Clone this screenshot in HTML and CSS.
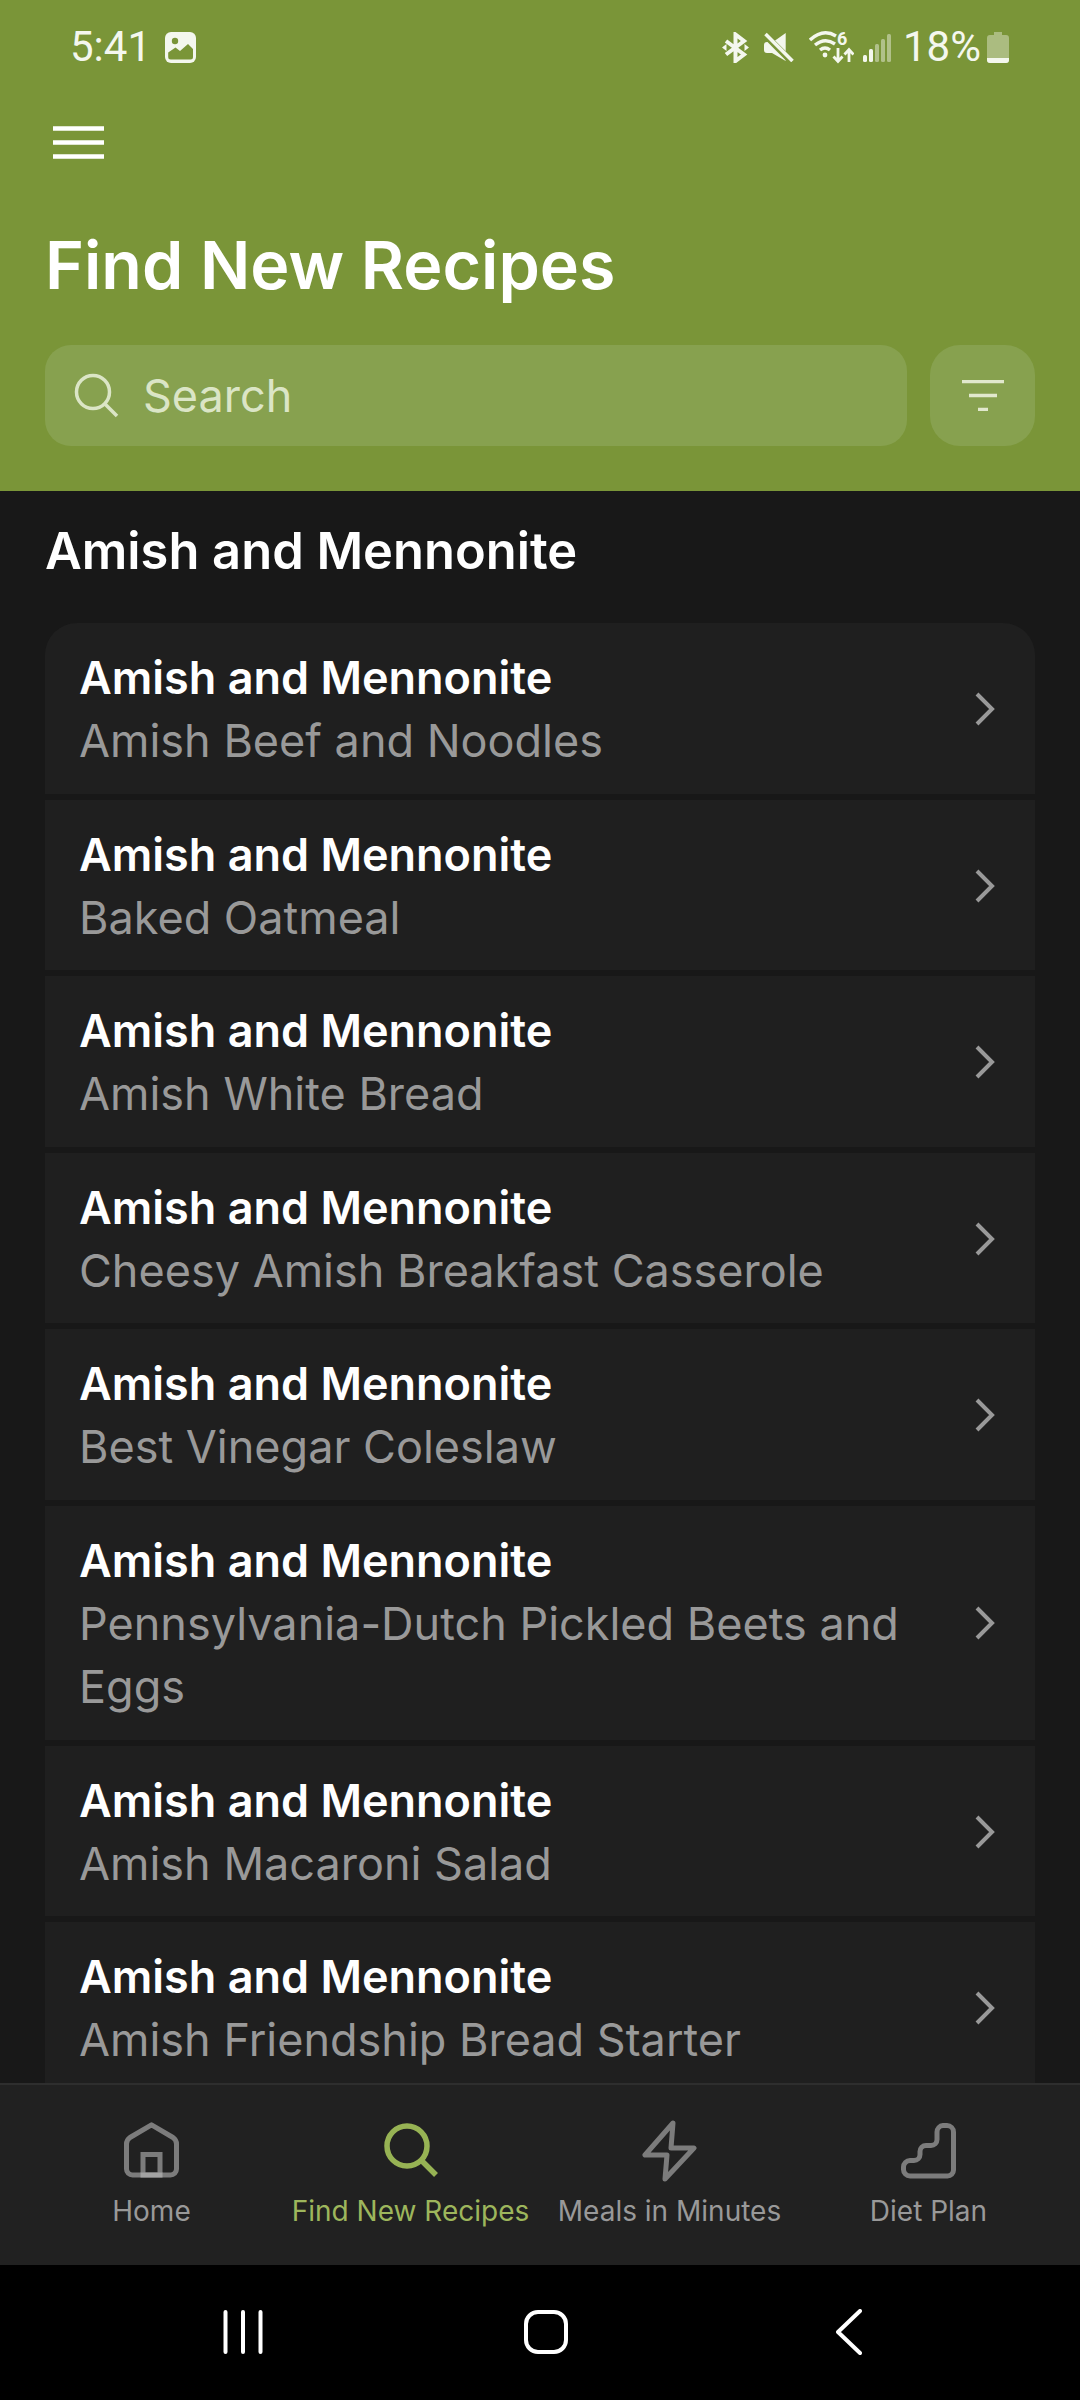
FILE: index.html
```html
<!DOCTYPE html>
<html lang="en">
<head>
  <meta charset="UTF-8" />
  <meta name="viewport" content="width=device-width, initial-scale=1.0"/>
  <title>Find New Recipes</title>
  <link rel="stylesheet" href="styles.css">
</head>
<body>
  <div class="screen">
    <header class="top">
      <div class="status-bar">
        <div class="status-left">
          <span class="status-text">5:41</span>
          <svg class="ic-image" width="31" height="31" viewBox="0 0 31 31">
            <rect width="31" height="31" rx="6" fill="#f4f7ee"/>
            <circle cx="10" cy="9" r="3.2" fill="#7a9538"/>
            <path d="M3.2 20.5 L10.5 15.5 L15 19 L23 12 L28 17 V25 Q28 27.5 25.5 27.5 H5.7 Q3.2 27.5 3.2 25 Z" fill="#7a9538"/>
          </svg>
        </div>
        <div class="status-right">
          <svg class="ic-bt" width="27" height="31" viewBox="0 0 27 31" fill="none">
            <path d="M4 9 L22 22.500 L13.500 29 V2.500 L22 9 L4 22.500" stroke="#f4f7ee" stroke-width="4"/>
            <path d="M0 15.500 L4.500 12 V19 Z M27 15.500 L22.500 12 V19 Z" fill="#f4f7ee"/>
          </svg>
          <svg class="ic-mute" width="30" height="30" viewBox="0 0 30 30">
            <path d="M21.700 1 V29 L8 21 H3 Q0 21 0 18 V13 Q0 10 3 10 H9 Z" fill="#f4f7ee"/>
            <path d="M0 2 L28 30" stroke="#7a9538" stroke-width="6.500"/>
            <path d="M1.500 2 L28.500 29" stroke="#f4f7ee" stroke-width="3.600"/>
          </svg>
          <svg class="ic-wifi" width="45" height="44" viewBox="0 -6 45 44" fill="none">
            <path d="M1 9 Q14 -3 27 5" stroke="#f4f7ee" stroke-width="3.400"/>
            <path d="M6 14 Q16 6 26 13" stroke="#f4f7ee" stroke-width="3.400"/>
            <path d="M11 19 Q16 15 21 19" stroke="#f4f7ee" stroke-width="3.400"/>
            <circle cx="16" cy="24" r="2.400" fill="#f4f7ee"/>
            <text x="28" y="14" class="wifi-six">6</text>
            <path d="M29 17 V30 M24.500 25.500 L29 30.500 L33.500 25.500 M40 31 V19 M35.500 23.500 L40 18.500 L44.500 23.500" stroke="#f4f7ee" stroke-width="2.800"/>
          </svg>
          <svg class="ic-signal" width="28" height="30" viewBox="0 0 28 30">
            <rect x="0" y="23" width="4" height="7" rx="1.500" fill="#f4f7ee"/>
            <rect x="6" y="17" width="4" height="13" rx="1.500" fill="#f4f7ee"/>
            <rect x="12" y="12" width="4" height="18" rx="1.500" fill="#f4f7ee" opacity=".45"/>
            <rect x="18" y="7" width="4" height="23" rx="1.500" fill="#f4f7ee" opacity=".45"/>
            <rect x="24" y="2" width="4" height="28" rx="1.500" fill="#f4f7ee" opacity=".45"/>
          </svg>
          <span class="status-text pct">18%</span>
          <svg class="ic-battery" width="22" height="31" viewBox="0 0 22 31">
            <path d="M7 0 H15 V3 H19 Q22 3 22 6 V28 Q22 31 19 31 H3 Q0 31 0 28 V6 Q0 3 3 3 H7 Z" fill="#f4f7ee" opacity=".4"/>
            <path d="M0 26 H22 V28 Q22 31 19 31 H3 Q0 31 0 28 Z" fill="#f4f7ee"/>
          </svg>
        </div>
      </div>

      <svg class="menu-icon" width="51" height="33" viewBox="0 0 51 33">
        <path d="M0 2.500 H51 M0 16.500 H51 M0 30.500 H51" stroke="#fff" stroke-width="4.500"/>
      </svg>

      <h1 class="page-title">Find New Recipes</h1>

      <div class="search-row">
        <div class="search-box">
          <svg width="46" height="46" viewBox="0 0 46 46" fill="none">
            <circle cx="19" cy="19" r="16.500" stroke="#dbe5c6" stroke-width="3.500"/>
            <path d="M31 31 L43 43" stroke="#dbe5c6" stroke-width="3.500"/>
          </svg>
          <span class="search-text">Search</span>
        </div>
        <div class="filter-btn">
          <svg width="42" height="31" viewBox="0 0 42 31">
            <path d="M0 1.500 H42 M7 15.500 H35 M16 29.500 H26" stroke="#e1e8cd" stroke-width="3.500"/>
          </svg>
        </div>
      </div>
    </header>

    <main class="content">
      <h2 class="section-title">Amish and Mennonite</h2>
      <div class="recipe-list">
        <div class="recipe-row">
          <div class="recipe-text"><div class="recipe-cat">Amish and Mennonite</div><div class="recipe-name">Amish Beef and Noodles</div></div>
          <svg class="chev" width="20" height="34" viewBox="0 0 20 34" fill="none"><path d="M2 2 L17 17 L2 32" stroke="#999" stroke-width="4"/></svg>
        </div>
        <div class="recipe-row">
          <div class="recipe-text"><div class="recipe-cat">Amish and Mennonite</div><div class="recipe-name">Baked Oatmeal</div></div>
          <svg class="chev" width="20" height="34" viewBox="0 0 20 34" fill="none"><path d="M2 2 L17 17 L2 32" stroke="#999" stroke-width="4"/></svg>
        </div>
        <div class="recipe-row">
          <div class="recipe-text"><div class="recipe-cat">Amish and Mennonite</div><div class="recipe-name">Amish White Bread</div></div>
          <svg class="chev" width="20" height="34" viewBox="0 0 20 34" fill="none"><path d="M2 2 L17 17 L2 32" stroke="#999" stroke-width="4"/></svg>
        </div>
        <div class="recipe-row">
          <div class="recipe-text"><div class="recipe-cat">Amish and Mennonite</div><div class="recipe-name">Cheesy Amish Breakfast Casserole</div></div>
          <svg class="chev" width="20" height="34" viewBox="0 0 20 34" fill="none"><path d="M2 2 L17 17 L2 32" stroke="#999" stroke-width="4"/></svg>
        </div>
        <div class="recipe-row">
          <div class="recipe-text"><div class="recipe-cat">Amish and Mennonite</div><div class="recipe-name">Best Vinegar Coleslaw</div></div>
          <svg class="chev" width="20" height="34" viewBox="0 0 20 34" fill="none"><path d="M2 2 L17 17 L2 32" stroke="#999" stroke-width="4"/></svg>
        </div>
        <div class="recipe-row">
          <div class="recipe-text"><div class="recipe-cat">Amish and Mennonite</div><div class="recipe-name">Pennsylvania-Dutch Pickled Beets and Eggs</div></div>
          <svg class="chev" width="20" height="34" viewBox="0 0 20 34" fill="none"><path d="M2 2 L17 17 L2 32" stroke="#999" stroke-width="4"/></svg>
        </div>
        <div class="recipe-row">
          <div class="recipe-text"><div class="recipe-cat">Amish and Mennonite</div><div class="recipe-name">Amish Macaroni Salad</div></div>
          <svg class="chev" width="20" height="34" viewBox="0 0 20 34" fill="none"><path d="M2 2 L17 17 L2 32" stroke="#999" stroke-width="4"/></svg>
        </div>
        <div class="recipe-row">
          <div class="recipe-text"><div class="recipe-cat">Amish and Mennonite</div><div class="recipe-name">Amish Friendship Bread Starter</div></div>
          <svg class="chev" width="20" height="34" viewBox="0 0 20 34" fill="none"><path d="M2 2 L17 17 L2 32" stroke="#999" stroke-width="4"/></svg>
        </div>
      </div>
    </main>

    <nav class="tab-bar">
      <div class="tab">
        <svg class="tab-icon" width="55" height="62" viewBox="0 -2 55 62" fill="none">
          <path d="M27.500 2.800 L49 15.500 Q52.500 18 52.500 22 V47 a6 6 0 0 1 -6 6 H8.500 a6 6 0 0 1 -6 -6 V22 Q2.500 18 6 15.500 Z" stroke="#7c7c7c" stroke-width="5" stroke-linejoin="round"/>
          <path d="M19 53 V32.500 H36 V53" stroke="#7c7c7c" stroke-width="5"/>
          <path d="M16.500 50.500 H38.500 V55.500 H16.500 Z" fill="#a3a3a3"/>
        </svg>
        <span class="tab-label">Home</span>
      </div>
      <div class="tab active">
        <svg class="tab-icon" width="55" height="62" viewBox="0 -2 55 62" fill="none">
          <circle cx="24" cy="24" r="20" stroke="#97b354" stroke-width="5.500"/>
          <path d="M38 38 L53 53" stroke="#97b354" stroke-width="5.500"/>
        </svg>
        <span class="tab-label">Find New Recipes</span>
      </div>
      <div class="tab">
        <svg class="tab-icon" width="55" height="62" viewBox="0 0 55 62" fill="none">
          <path d="M31 3 L3 35 H25 L23 59 L52 28 H29 Z" stroke="#7c7c7c" stroke-width="5" stroke-linejoin="round"/>
        </svg>
        <span class="tab-label">Meals in Minutes</span>
      </div>
      <div class="tab">
        <svg class="tab-icon" width="55" height="62" viewBox="0 -3 55 62" fill="none">
          <path d="M42 2.500 H46 a6.500 6.500 0 0 1 6.500 6.500 V47 a6 6 0 0 1 -6 6 H9 a6.500 6.500 0 0 1 -6.500 -6.500 V44 a6.500 6.500 0 0 1 6.500 -6.500 H13 a6 6 0 0 0 6 -6 V28.500 a6 6 0 0 1 6 -6 H30 a6 6 0 0 0 6 -6 V9 a6.500 6.500 0 0 1 6 -6.500 Z" stroke="#7c7c7c" stroke-width="5" stroke-linejoin="round"/>
        </svg>
        <span class="tab-label">Diet Plan</span>
      </div>
    </nav>

    <div class="nav-bar">
      <div class="nav-btn">
        <svg width="40" height="44" viewBox="0 0 40 44"><path d="M2.500 2 V42 M20 2 V42 M37.500 2 V42" stroke="#fff" stroke-width="4" stroke-linecap="round"/></svg>
      </div>
      <div class="nav-btn">
        <svg width="44" height="44" viewBox="0 0 44 44" fill="none"><rect x="2" y="2" width="40" height="40" rx="12" stroke="#fff" stroke-width="4"/></svg>
      </div>
      <div class="nav-btn">
        <svg width="26" height="46" viewBox="0 0 26 46" fill="none"><path d="M24 2 L2 23 L24 44" stroke="#fff" stroke-width="4" stroke-linecap="round" stroke-linejoin="round"/></svg>
      </div>
    </div>
  </div>
</body>
</html>
```

FILE: styles.css
```css
* {
  box-sizing: border-box;
}

html, body {
  margin: 0;
  padding: 0;
}

body {
  font-family: Inter, 'Noto Sans', sans-serif;
  background: #181818;
  color: #fff;
}

svg {
  display: block;
  flex-shrink: 0;
}

.screen {
  width: 1080px;
  height: 2400px;
  display: flex;
  flex-direction: column;
  overflow: hidden;
}

/* green header */
.top {
  background: #7a9538;
  height: 491px;
  flex-shrink: 0;
}

.status-bar {
  height: 70px;
  padding: 24px 71px 0 70px;
  display: flex;
  justify-content: space-between;
  align-items: center;
}

.status-left {
  display: flex;
  align-items: center;
  gap: 14px;
}

.status-right {
  display: flex;
  align-items: center;
}

.status-text {
  font-family: Roboto, sans-serif;
  font-size: 42px;
  line-height: 46px;
  color: #f4f7ee;
}

.ic-mute { margin-left: 15px; }
.ic-wifi { margin-left: 15px; }
.ic-signal { margin-left: 9px; }
.pct { margin-left: 12px; margin-right: 6px; }

.wifi-six {
  font-family: Roboto, sans-serif;
  font-size: 18px;
  font-weight: 700;
  fill: #f4f7ee;
}

.menu-icon {
  margin: 56px 0 0 53px;
}

.page-title {
  margin: 66px 0 0 45px;
  font-size: 66.3px;
  font-weight: 600;
  line-height: 80px;
  color: #fff;
}

.search-row {
  display: flex;
  gap: 23px;
  margin: 40px 45px 0;
}

.search-box {
  flex: 1;
  height: 101px;
  padding-left: 29px;
  display: flex;
  align-items: center;
  gap: 23px;
  background: #87a14f;
  border-radius: 26px;
}

.search-text {
  font-size: 45px;
  color: #dbe5c6;
}

.filter-btn {
  width: 105px;
  height: 101px;
  display: flex;
  align-items: center;
  justify-content: center;
  background: #87a14f;
  border-radius: 30px;
}

/* list */
.content {
  flex: 1;
  min-height: 0;
  overflow: hidden;
  padding: 25px 45px 0;
}

.section-title {
  margin: 0 0 37px;
  font-size: 50.6px;
  font-weight: 600;
  line-height: 70px;
}

.recipe-list {
  display: flex;
  flex-direction: column;
  gap: 6px;
  border-radius: 32px 32px 0 0;
  overflow: hidden;
}

.recipe-row {
  display: flex;
  align-items: center;
  gap: 58px;
  padding: 23px 40px 21.6px 34px;
  background: #1f1f1f;
}

.recipe-text {
  flex: 1;
}

.recipe-cat {
  font-size: 45px;
  font-weight: 600;
  line-height: 63px;
}

.recipe-name {
  font-size: 45px;
  line-height: 63px;
  color: #999;
}

/* bottom tabs */
.tab-bar {
  height: 182px;
  flex-shrink: 0;
  display: grid;
  grid-template-columns: repeat(4, 259px);
  padding: 34px 22px 0;
  background: #212121;
  border-top: 2px solid #2e2e2e;
}

.tab {
  display: flex;
  flex-direction: column;
  align-items: center;
}

.tab-icon {
  margin-top: 1px;
}

.tab-label {
  margin-top: 11px;
  font-size: 28px;
  line-height: 36px;
  white-space: nowrap;
  color: #999;
}

.tab.active .tab-label {
  color: #9db65c;
}

/* android nav */
.nav-bar {
  height: 135px;
  flex-shrink: 0;
  display: grid;
  grid-template-columns: repeat(3, 303px);
  justify-content: center;
  padding: 0 0 0 12px;
  align-items: center;
  background: #000;
}

.nav-btn {
  display: flex;
  justify-content: center;
  margin-top: -1px;
}
```
